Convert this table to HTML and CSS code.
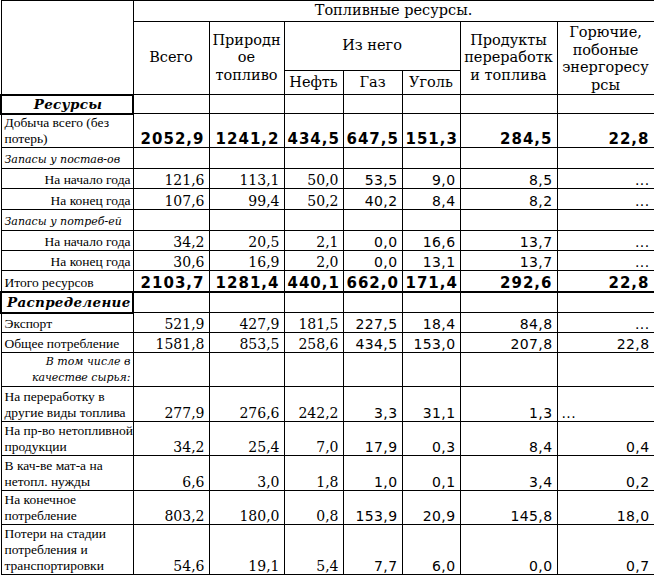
FILE: index.html
```html
<!DOCTYPE html>
<html lang="ru">
<head>
<meta charset="utf-8">
<title>Топливные ресурсы</title>
<link rel="stylesheet" href="styles.css">
</head>
<body>
<table class="t">
<colgroup>
<col class="c0"><col class="c1"><col class="c2"><col class="c3"><col class="c4"><col class="c5"><col class="c6"><col class="c7">
</colgroup>
<tr class="h1"><td rowspan="3" class="corner"></td><td colspan="7" class="hd">Топливные ресурсы.</td></tr>
<tr class="h2"><td rowspan="2" class="hd">Всего</td><td rowspan="2" class="hd">Природн<br>ое<br>топливо</td><td colspan="3" class="hd">Из него</td><td rowspan="2" class="hd">Продукты<br>переработк<br>и топлива</td><td rowspan="2" class="hd hd4">Горючие,<br>побоные<br>энергоресу<br>рсы</td></tr>
<tr class="h3"><td class="hd">Нефть</td><td class="hd">Газ</td><td class="hd">Уголь</td></tr>

<tr class="r19"><td class="sec ctr">Ресурсы</td><td></td><td></td><td></td><td></td><td></td><td></td><td></td></tr>
<tr class="r34 b"><td class="lab">Добыча всего (без<br>потерь)</td><td>2052,9</td><td>1241,2</td><td>434,5</td><td>647,5</td><td>151,3</td><td>284,5</td><td>22,8</td></tr>
<tr class="r21"><td class="it">Запасы у постав-ов</td><td></td><td></td><td></td><td></td><td></td><td></td><td></td></tr>
<tr class="r20"><td class="lab rt">На начало года</td><td>121,6</td><td>113,1</td><td>50,0</td><td>53,5</td><td>9,0</td><td>8,5</td><td>...</td></tr>
<tr class="r21"><td class="lab rt">На конец года</td><td>107,6</td><td>99,4</td><td>50,2</td><td>40,2</td><td>8,4</td><td>8,2</td><td>...</td></tr>
<tr class="r21"><td class="it">Запасы у потреб-ей</td><td></td><td></td><td></td><td></td><td></td><td></td><td></td></tr>
<tr class="r20"><td class="lab rt">На начало года</td><td>34,2</td><td>20,5</td><td>2,1</td><td>0,0</td><td>16,6</td><td>13,7</td><td>...</td></tr>
<tr class="r20"><td class="lab rt">На конец года</td><td>30,6</td><td>16,9</td><td>2,0</td><td>0,0</td><td>13,1</td><td>13,7</td><td>...</td></tr>
<tr class="r21 b tot"><td class="lab">Итого ресурсов</td><td>2103,7</td><td>1281,4</td><td>440,1</td><td>662,0</td><td>171,4</td><td>292,6</td><td>22,8</td></tr>
<tr class="r21"><td class="sec">Распределение</td><td></td><td></td><td></td><td></td><td></td><td></td><td></td></tr>
<tr class="r20"><td class="lab">Экспорт</td><td>521,9</td><td>427,9</td><td>181,5</td><td>227,5</td><td>18,4</td><td>84,8</td><td>...</td></tr>
<tr class="r20"><td class="lab">Общее потребление</td><td>1581,8</td><td>853,5</td><td>258,6</td><td>434,5</td><td>153,0</td><td>207,8</td><td>22,8</td></tr>
<tr class="r34"><td class="it rt">В том числе в<br>качестве сырья:</td><td></td><td></td><td></td><td></td><td></td><td></td><td></td></tr>
<tr class="r35"><td class="lab">На переработку в<br>другие виды топлива</td><td>277,9</td><td>276,6</td><td>242,2</td><td>3,3</td><td>31,1</td><td>1,3</td><td class="lft">...</td></tr>
<tr class="r34"><td class="lab">На пр-во нетопливной<br>продукции</td><td>34,2</td><td>25,4</td><td>7,0</td><td>17,9</td><td>0,3</td><td>8,4</td><td>0,4</td></tr>
<tr class="r35"><td class="lab">В кач-ве мат-а на<br>нетопл. нужды</td><td>6,6</td><td>3,0</td><td>1,8</td><td>1,0</td><td>0,1</td><td>3,4</td><td>0,2</td></tr>
<tr class="r34"><td class="lab">На конечное<br>потребление</td><td>803,2</td><td>180,0</td><td>0,8</td><td>153,9</td><td>20,9</td><td>145,8</td><td>18,0</td></tr>
<tr class="r50"><td class="lab">Потери на стадии<br>потребления и<br>транспортировки</td><td>54,6</td><td>19,1</td><td>5,4</td><td>7,7</td><td>6,0</td><td>0,0</td><td>0,7</td></tr>
</table>
</body>
</html>
```

FILE: styles.css
```css
html, body {
  margin: 0;
  padding: 0;
  background: #fff;
}

.t {
  border-collapse: collapse;
  table-layout: fixed;
  width: 653px;
  color: #000;
}

.c0 { width: 132px; }
.c1 { width: 76px; }
.c2 { width: 75px; }
.c3 { width: 59px; }
.c4 { width: 59px; }
.c5 { width: 58px; }
.c6 { width: 97px; }
.c7 { width: 97px; }

.t td {
  border: 1px solid #000;
  padding: 0 4px 0 3px;
  white-space: nowrap;
  overflow: hidden;
  vertical-align: bottom;
  text-align: right;
  font-family: "DejaVu Sans", "Liberation Sans", sans-serif;
  font-size: 14px;
  letter-spacing: 0.4px;
  line-height: 16px;
}

.t td:nth-child(2),
.t td:nth-child(3),
.t td:nth-child(4) {
  font-family: "DejaVu Serif", "Liberation Serif", serif;
  letter-spacing: 0;
}

.t td.hd {
  font-family: "DejaVu Serif", "Liberation Serif", serif;
  font-size: 14.5px;
  letter-spacing: 0;
  text-align: center;
  vertical-align: middle;
  line-height: 17.5px;
  overflow: visible;
  padding: 0 1px;
}

.t td.hd4 {
  vertical-align: top;
  padding-top: 2px;
}

.h1 { height: 21px; }
.h2 { height: 48px; }
.h3 { height: 24px; }
.r19 { height: 19px; }
.r20 { height: 20px; }
.r21 { height: 21px; }
.r34 { height: 34px; }
.r35 { height: 35px; }
.r50 { height: 50px; }

.t .b td {
  font-family: "DejaVu Sans", "Liberation Sans", sans-serif;
  font-weight: bold;
  font-size: 15px;
  letter-spacing: 1px;
}

.t .tot td {
  border-bottom: 2px solid #000;
}

.t td.lab {
  font-family: "Liberation Serif", "Times New Roman", serif;
  font-weight: normal;
  font-size: 13.5px;
  letter-spacing: 0;
  line-height: 16px;
  text-align: left;
  padding: 0 2px 0 3px;
}

.t td.it {
  font-family: "DejaVu Serif", "Liberation Serif", serif;
  font-style: italic;
  font-size: 11px;
  letter-spacing: 0;
  line-height: 16px;
  text-align: left;
  padding: 0 2px 0 3px;
}

.t td.rt {
  text-align: right;
}

.t td.sec {
  font-family: "DejaVu Serif", "Liberation Serif", serif;
  font-style: italic;
  font-weight: bold;
  font-size: 13.5px;
  letter-spacing: 0.3px;
  text-align: left;
  vertical-align: middle;
  border: 2px solid #000;
  padding: 0 3px 0 5px;
}

.t td.ctr {
  text-align: center;
}

.t td.lft {
  text-align: left;
  padding-left: 4px;
}
```
